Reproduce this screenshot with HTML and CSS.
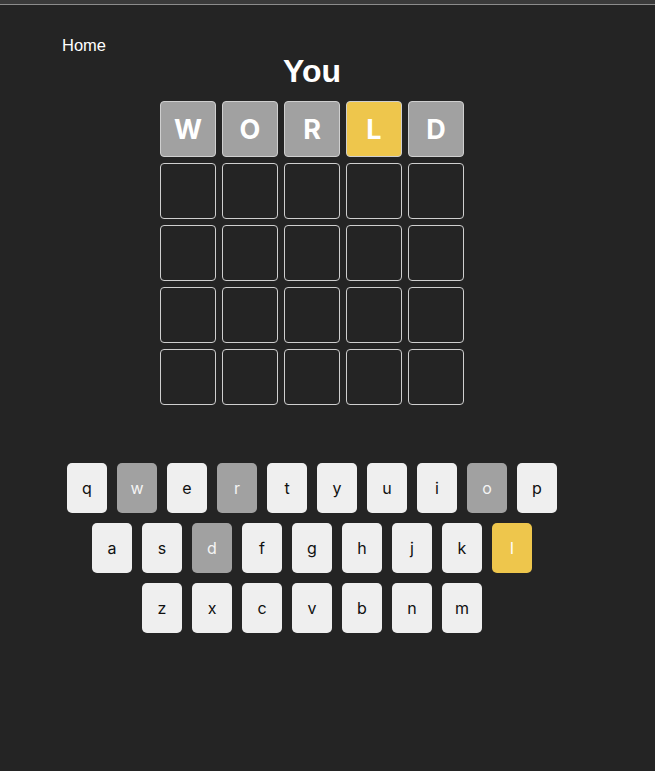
FILE: index.html
```html
<!DOCTYPE html>
<html>
<head>
<meta charset="utf-8">
<link rel="stylesheet" href="styles.css">
</head>
<body>
<div class="topbar"></div>
<div class="page">
  <nav class="nav"><a class="home" href="#">Home</a></nav>
  <h1 class="title">You</h1>
  <div class="board">
    <div class="tile gray">W</div><div class="tile gray">O</div><div class="tile gray">R</div><div class="tile yellow">L</div><div class="tile gray">D</div>
    <div class="tile"></div><div class="tile"></div><div class="tile"></div><div class="tile"></div><div class="tile"></div>
    <div class="tile"></div><div class="tile"></div><div class="tile"></div><div class="tile"></div><div class="tile"></div>
    <div class="tile"></div><div class="tile"></div><div class="tile"></div><div class="tile"></div><div class="tile"></div>
    <div class="tile"></div><div class="tile"></div><div class="tile"></div><div class="tile"></div><div class="tile"></div>
  </div>
  <div class="keyboard">
    <div class="krow">
      <div class="key">q</div><div class="key gray">w</div><div class="key">e</div><div class="key gray">r</div><div class="key">t</div><div class="key">y</div><div class="key">u</div><div class="key">i</div><div class="key gray">o</div><div class="key">p</div>
    </div>
    <div class="krow">
      <div class="key">a</div><div class="key">s</div><div class="key gray">d</div><div class="key">f</div><div class="key">g</div><div class="key">h</div><div class="key">j</div><div class="key">k</div><div class="key yellow">l</div>
    </div>
    <div class="krow">
      <div class="key">z</div><div class="key">x</div><div class="key">c</div><div class="key">v</div><div class="key">b</div><div class="key">n</div><div class="key">m</div>
    </div>
  </div>
</div>
</body>
</html>
```
FILE: styles.css
```css
html, body {
  margin: 0;
  padding: 0;
  background: #242424;
  height: 100%;
}
body {
  font-family: "Liberation Sans", Arial, sans-serif;
  color: #fff;
}
.topbar {
  height: 4px;
  background: #3a3a3a;
  border-bottom: 1px solid #8c8c8c;
}
.page {
  width: 624px;
  display: flex;
  flex-direction: column;
  align-items: center;
}
.nav {
  align-self: stretch;
  padding: 31px 0 0 62px;
  height: 17px;
}
.home {
  color: #fff;
  text-decoration: none;
  font-size: 16.5px;
  line-height: 18px;
}
.title {
  margin: 0 0 12px;
  font-size: 32px;
  line-height: 36px;
  font-weight: 700;
}
.board {
  display: grid;
  grid-template-columns: repeat(5, 56px);
  grid-auto-rows: 56px;
  gap: 6px;
}
.tile {
  box-sizing: border-box;
  border: 1px solid #cfcfcf;
  border-radius: 4px;
  display: flex;
  align-items: center;
  justify-content: center;
  font-family: Inter, "Open Sans", sans-serif;
  font-weight: 700;
  font-size: 27px;
  color: #fff;
}
.tile.gray { background: #a1a1a1; }
.tile.yellow { background: #eec64c; }
.keyboard {
  margin-top: 58px;
  display: flex;
  flex-direction: column;
  align-items: center;
  gap: 10px;
}
.krow {
  display: flex;
  gap: 10px;
}
.key {
  width: 40px;
  height: 50px;
  border-radius: 5px;
  background: #efefef;
  color: #111;
  display: flex;
  align-items: center;
  justify-content: center;
  font-family: Inter, "Open Sans", sans-serif;
  font-size: 16px;
}
.key.gray { background: #a1a1a1; color: #f4f4f4; }
.key.yellow { background: #eec64c; color: #fff; }
```
